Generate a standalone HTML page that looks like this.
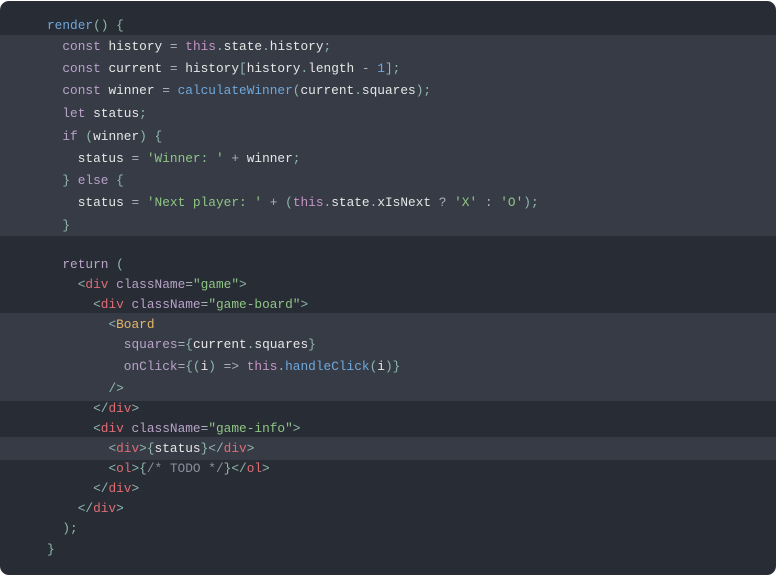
<!DOCTYPE html>
<html><head><meta charset="utf-8"><style>
html,body{margin:0;padding:0;background:#fff;width:778px;height:576px;overflow:hidden}
.box{position:absolute;left:0;top:1px;width:776px;height:574px;background:#282c34;border-radius:9px;overflow:hidden}
.band{position:absolute;left:0;width:776px;background:#363b46}
.l{position:absolute;left:47px;height:20px;line-height:20px;font-family:"Liberation Mono",monospace;font-size:12.8px;white-space:pre;color:#e6e6e6}
.k{color:#b9a3c9}.p{color:#8fb7ae}.f{color:#6fa8dc}.n{color:#6fa8dc}.s{color:#8fc585}.t{color:#e06c75}.c{color:#e5b567}.a{color:#b9a3c9}.o{color:#a9b0bb}.cm{color:#8a919c}.th{color:#c594c5}
</style></head><body><div class="box">
<div class="band" style="top:34px;height:201px"></div>
<div class="band" style="top:312px;height:88px"></div>
<div class="band" style="top:436px;height:23px"></div>
<div class="l" style="top:15px"><span class="f">render</span><span class="p">() {</span></div>
<div class="l" style="top:36px">  <span class="k">const</span> history <span class="o">=</span> <span class="th">this</span><span class="p">.</span>state<span class="p">.</span>history<span class="p">;</span></div>
<div class="l" style="top:58px">  <span class="k">const</span> current <span class="o">=</span> history<span class="p">[</span>history<span class="p">.</span>length <span class="o">-</span> <span class="n">1</span><span class="p">];</span></div>
<div class="l" style="top:80px">  <span class="k">const</span> winner <span class="o">=</span> <span class="f">calculateWinner</span><span class="p">(</span>current<span class="p">.</span>squares<span class="p">);</span></div>
<div class="l" style="top:103px">  <span class="k">let</span> status<span class="p">;</span></div>
<div class="l" style="top:126px">  <span class="k">if</span> <span class="p">(</span>winner<span class="p">) {</span></div>
<div class="l" style="top:148px">    status <span class="o">=</span> <span class="s">'Winner: '</span> <span class="o">+</span> winner<span class="p">;</span></div>
<div class="l" style="top:170px">  <span class="p">}</span> <span class="k">else</span> <span class="p">{</span></div>
<div class="l" style="top:192px">    status <span class="o">=</span> <span class="s">'Next player: '</span> <span class="o">+</span> <span class="p">(</span><span class="th">this</span><span class="p">.</span>state<span class="p">.</span>xIsNext <span class="o">?</span> <span class="s">'X'</span> <span class="o">:</span> <span class="s">'O'</span><span class="p">);</span></div>
<div class="l" style="top:215px">  <span class="p">}</span></div>
<div class="l" style="top:254px">  <span class="k">return</span> <span class="p">(</span></div>
<div class="l" style="top:274px">    <span class="p">&lt;</span><span class="t">div</span> <span class="a">className</span><span class="o">=</span><span class="s">"game"</span><span class="p">&gt;</span></div>
<div class="l" style="top:294px">      <span class="p">&lt;</span><span class="t">div</span> <span class="a">className</span><span class="o">=</span><span class="s">"game-board"</span><span class="p">&gt;</span></div>
<div class="l" style="top:314px">        <span class="p">&lt;</span><span class="c">Board</span></div>
<div class="l" style="top:334px">          <span class="a">squares</span><span class="o">=</span><span class="p">{</span>current<span class="p">.</span>squares<span class="p">}</span></div>
<div class="l" style="top:356px">          <span class="a">onClick</span><span class="o">=</span><span class="p">{(</span>i<span class="p">)</span> <span class="o">=&gt;</span> <span class="th">this</span><span class="p">.</span><span class="f">handleClick</span><span class="p">(</span>i<span class="p">)}</span></div>
<div class="l" style="top:378px">        <span class="p">/&gt;</span></div>
<div class="l" style="top:398px">      <span class="p">&lt;/</span><span class="t">div</span><span class="p">&gt;</span></div>
<div class="l" style="top:418px">      <span class="p">&lt;</span><span class="t">div</span> <span class="a">className</span><span class="o">=</span><span class="s">"game-info"</span><span class="p">&gt;</span></div>
<div class="l" style="top:438px">        <span class="p">&lt;</span><span class="t">div</span><span class="p">&gt;{</span>status<span class="p">}&lt;/</span><span class="t">div</span><span class="p">&gt;</span></div>
<div class="l" style="top:458px">        <span class="p">&lt;</span><span class="t">ol</span><span class="p">&gt;{</span><span class="cm">/* TODO */</span><span class="p">}&lt;/</span><span class="t">ol</span><span class="p">&gt;</span></div>
<div class="l" style="top:478px">      <span class="p">&lt;/</span><span class="t">div</span><span class="p">&gt;</span></div>
<div class="l" style="top:498px">    <span class="p">&lt;/</span><span class="t">div</span><span class="p">&gt;</span></div>
<div class="l" style="top:518px">  <span class="p">);</span></div>
<div class="l" style="top:539px"><span class="p">}</span></div>
</div></body></html>
